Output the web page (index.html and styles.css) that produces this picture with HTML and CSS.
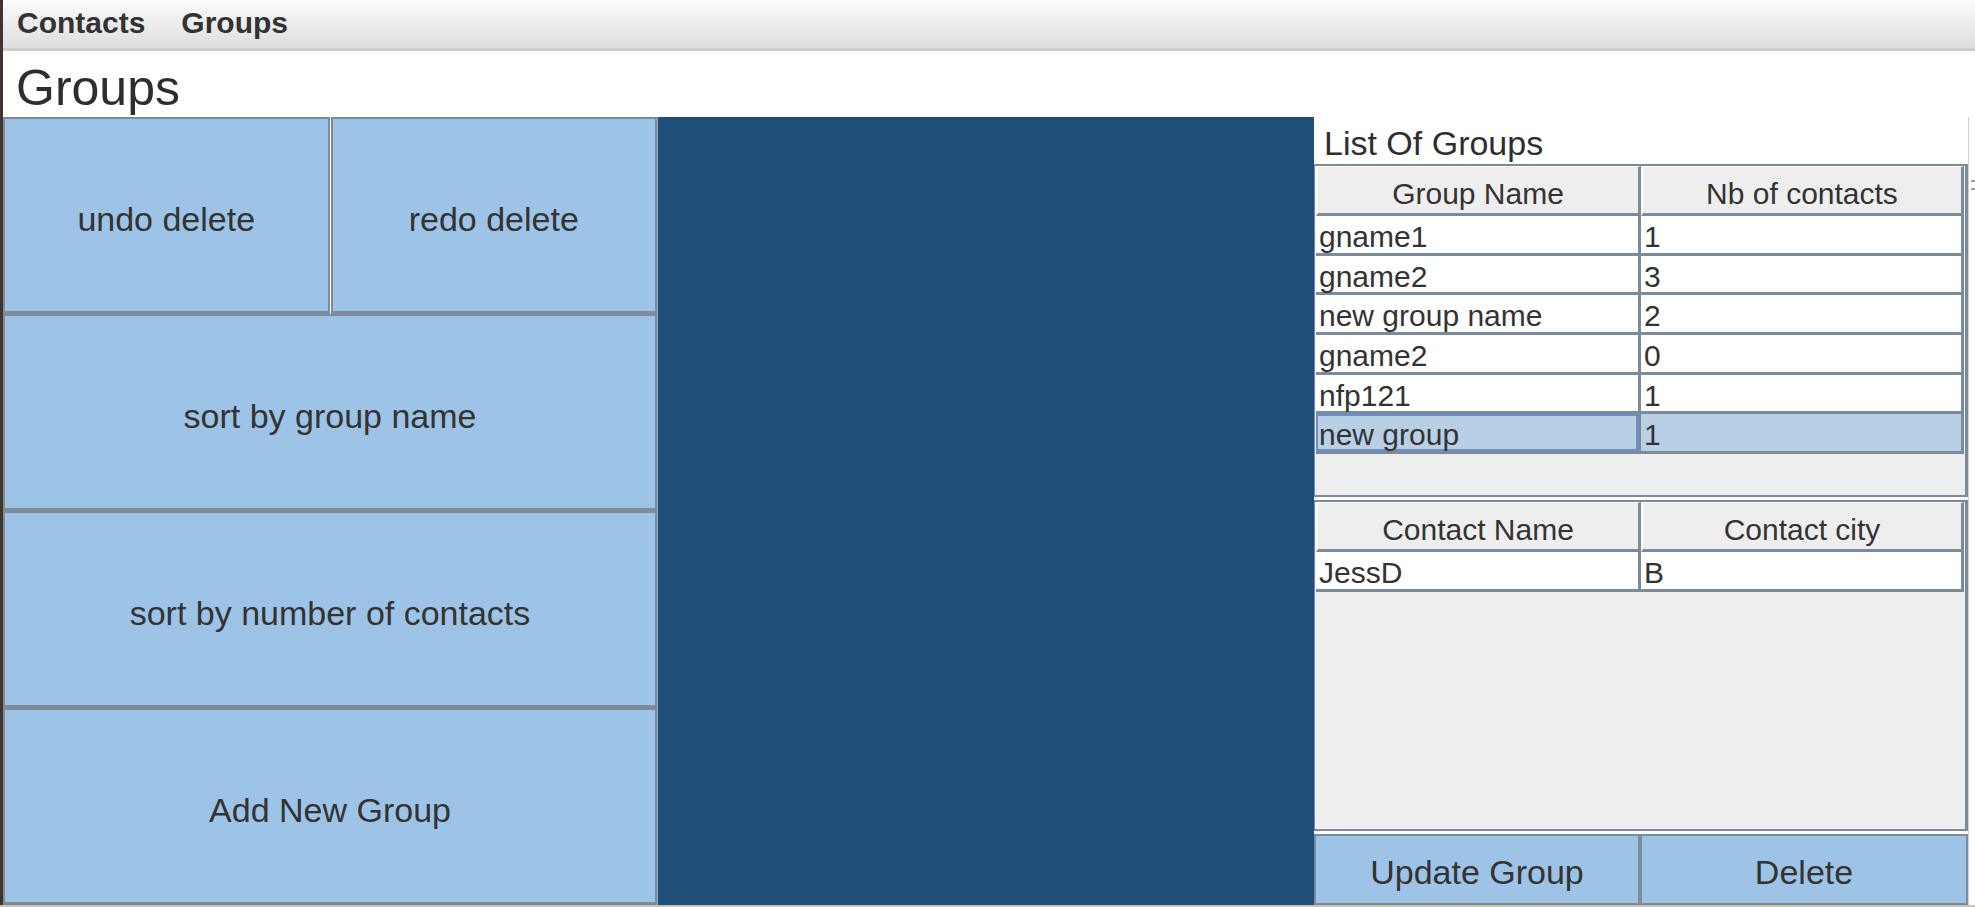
FILE: index.html
```html
<!DOCTYPE html>
<html>
<head>
<meta charset="utf-8">
<link rel="stylesheet" href="styles.css">
</head>
<body>
<div class="window">
  <div class="menubar">
    <span class="menu-item">Contacts</span>
    <span class="menu-item">Groups</span>
  </div>
  <div class="titlebar"><h1 class="page-title">Groups</h1></div>
  <div class="main">
    <div class="actions">
      <button class="btn">undo delete</button>
      <button class="btn">redo delete</button>
      <button class="btn wide">sort by group name</button>
      <button class="btn wide">sort by number of contacts</button>
      <button class="btn wide">Add New Group</button>
    </div>
    <div class="canvas"></div>
    <div class="side">
      <div class="side-label">List Of Groups</div>
      <div class="scroll groups">
        <table class="grid">
          <thead>
            <tr><th>Group Name</th><th>Nb of contacts</th></tr>
          </thead>
          <tbody>
            <tr><td>gname1</td><td>1</td></tr>
            <tr><td>gname2</td><td>3</td></tr>
            <tr><td>new group name</td><td>2</td></tr>
            <tr><td>gname2</td><td>0</td></tr>
            <tr><td>nfp121</td><td>1</td></tr>
            <tr class="selected"><td class="focus">new group</td><td>1</td></tr>
          </tbody>
        </table>
      </div>
      <div class="scroll contacts">
        <table class="grid">
          <thead>
            <tr><th>Contact Name</th><th>Contact city</th></tr>
          </thead>
          <tbody>
            <tr><td>JessD</td><td>B</td></tr>
          </tbody>
        </table>
      </div>
      <div class="side-buttons">
        <button class="btn small">Update Group</button>
        <button class="btn small">Delete</button>
      </div>
    </div>
    <div class="edge"><span class="grip"></span></div>
  </div>
</div>
</body>
</html>
```

FILE: styles.css
```css
* { box-sizing: border-box; }
html, body {
  margin: 0;
  padding: 0;
}
body {
  width: 1975px;
  height: 907px;
  overflow: hidden;
  background: #c9c2b5;
  font-family: "Liberation Sans", Arial, sans-serif;
  color: #333333;
}
.window {
  height: 905px;
  border-left: 3px solid #3d362e;
  background: #ffffff;
  display: flex;
  flex-direction: column;
}
.menubar {
  height: 51px;
  flex: none;
  background: linear-gradient(#fbfbfb, #dedede);
  border-bottom: 3px solid #cdcdcd;
  display: flex;
  align-items: center;
  padding-left: 14px;
  gap: 36px;
}
.menu-item {
  font-weight: bold;
  font-size: 30px;
  color: #333333;
  padding-bottom: 3px;
}
.titlebar {
  height: 66px;
  flex: none;
  background: #ffffff;
  display: flex;
  align-items: flex-end;
  padding-left: 13px;
}
.page-title {
  margin: 0;
  font-weight: normal;
  font-size: 50px;
  line-height: 1;
  padding-bottom: 4px;
  color: #2e2e2e;
}
.main {
  flex: 1;
  display: grid;
  grid-template-columns: 654px 657px 654px 1fr;
}
.actions {
  display: grid;
  grid-template-columns: 1fr 1fr;
  grid-template-rows: repeat(4, 1fr);
  column-gap: 1px;
}
.btn {
  font-family: "Liberation Sans", Arial, sans-serif;
  background: #9dc3e6;
  border: 2px solid #7c8b9b;
  color: #333333;
  font-size: 34px;
  padding: 8px 0 0 0;
  margin: 0;
}
.actions .btn {
  border-bottom-width: 3px;
}
.btn.wide {
  grid-column: span 2;
  border-top-width: 2px;
}
.canvas {
  background: #1f4e79;
  border-left: 1px solid #8ea7c0;
}
.side {
  background: #ffffff;
  display: flex;
  flex-direction: column;
}
.side-label {
  height: 47px;
  flex: none;
  font-size: 34px;
  padding-left: 10px;
  padding-top: 7px;
  color: #2e2e2e;
}
.scroll {
  background: #eeeeee;
  border: 2px solid #7c8b9b;
  border-right-width: 3px;
  border-left: 1px solid #7c8b9b;
  overflow: hidden;
}
.groups {
  height: 333px;
}
.contacts {
  height: 331px;
  margin-top: 3px;
}
.grid {
  border-collapse: separate;
  border-spacing: 0;
  width: 648px;
  table-layout: fixed;
  margin-left: 1px;
  font-size: 30px;
}
.grid th {
  height: 50px;
  font-weight: normal;
  background: #eeeeee;
  border-top: 1px solid #ffffff;
  border-left: 2px solid #ffffff;
  border-bottom: 3px solid #7c8b9b;
  border-right: 3px solid #7c8b9b;
  text-align: center;
  padding: 7px 0 0 0;
}
.grid th:first-child,
.grid td:first-child {
  width: 325px;
}
.grid td {
  height: 39.7px;
  line-height: 31px;
  background: #ffffff;
  border-bottom: 3px solid #7c8b9b;
  border-right: 3px solid #7c8b9b;
  padding: 4px 0 0 3px;
  text-align: left;
  white-space: nowrap;
}
.grid tr.selected td {
  background: #b8cfe5;
}
.grid td.focus {
  box-shadow: inset 0 0 0 2px #6d8ec4;
}
.side-buttons {
  margin-top: 3px;
  flex: 1;
  display: grid;
  grid-template-columns: 326px 328px;
}
.btn.small {
  font-size: 34px;
  border-width: 2px;
  padding-top: 6px;
}
.edge {
  background: #ffffff;
  border-left: 1px solid #d0d0d0;
  position: relative;
}
.grip {
  position: absolute;
  left: 2px;
  top: 63px;
  width: 4px;
  height: 10px;
  border-top: 2px solid #a0a0a0;
  border-bottom: 2px solid #a0a0a0;
}
```
